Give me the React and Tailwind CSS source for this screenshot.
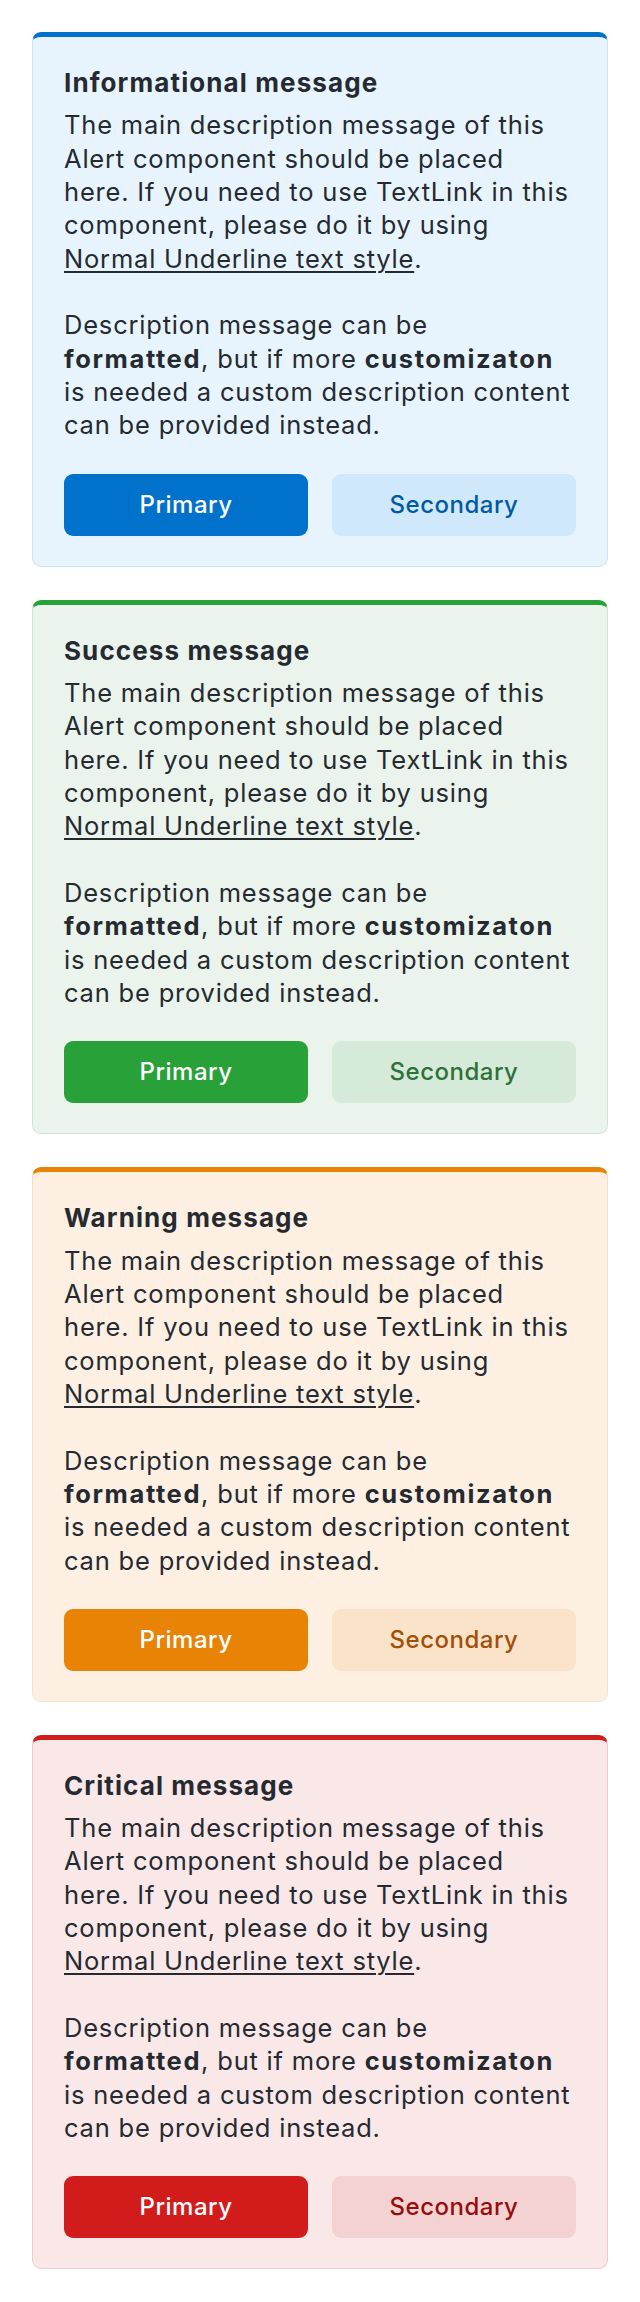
import React from "react";

const alerts = [
  {
    title: "Informational message",
    card: "bg-[#e8f4fd] border-[#cde4f8] border-t-[#0172cb]",
    primary: "bg-[#0172cb] text-white",
    secondary: "bg-[#d0e8fb] text-[#005aa3]",
  },
  {
    title: "Success message",
    card: "bg-[#ebf4ec] border-[#cfe5d2] border-t-[#28a138]",
    primary: "bg-[#28a138] text-white",
    secondary: "bg-[#d6eada] text-[#2e7037]",
  },
  {
    title: "Warning message",
    card: "bg-[#fdf0e3] border-[#f8e0c3] border-t-[#e98305]",
    primary: "bg-[#e98305] text-white",
    secondary: "bg-[#fae3c8] text-[#a24f0a]",
  },
  {
    title: "Critical message",
    card: "bg-[#fae8e8] border-[#f2caca] border-t-[#d21c1c]",
    primary: "bg-[#d21c1c] text-white",
    secondary: "bg-[#f4d2d2] text-[#970c0c]",
  },
];

function Alert({ alert }) {
  return (
    <div
      className={`rounded-[9px] border border-t-[5px] px-[31px] pt-[29px] pb-[30px] ${alert.card}`}
    >
      <h2 className="text-[26px] leading-[33.33px] font-bold tracking-[1.1px]">
        {alert.title}
      </h2>
      <div className="mt-[9px] text-[25.5px] leading-[33.33px] tracking-[0.8px]">
        <p>
          The main description message of this
          <br />
          Alert component should be placed
          <br />
          here. If you need to use TextLink in this
          <br />
          component, please do it by using
          <br />
          <a href="#" className="underline underline-offset-[3px] decoration-[1.5px]">
            Normal Underline text style
          </a>
          .
        </p>
        <p className="mt-[33.33px]">
          Description message can be
          <br />
          <strong className="font-bold tracking-[1.6px]">formatted</strong>, but if more{" "}
          <strong className="font-bold tracking-[1.6px]">customizaton</strong>
          <br />
          is needed a custom description content
          <br />
          can be provided instead.
        </p>
      </div>
      <div className="mt-[32px] grid grid-cols-2 gap-[24px]">
        <button
          className={`h-[62px] rounded-[9px] text-[24px] font-medium tracking-[0.5px] ${alert.primary}`}
        >
          Primary
        </button>
        <button
          className={`h-[62px] rounded-[9px] text-[24px] font-medium tracking-[0.5px] ${alert.secondary}`}
        >
          Secondary
        </button>
      </div>
    </div>
  );
}

export default function App() {
  return (
    <div className="min-h-screen bg-white px-[32px] pt-[32px] pb-[35px] font-['Inter',sans-serif] text-[#252a31]">
      <div className="flex flex-col gap-[33px]">
        {alerts.map((a) => (
          <Alert key={a.title} alert={a} />
        ))}
      </div>
    </div>
  );
}
